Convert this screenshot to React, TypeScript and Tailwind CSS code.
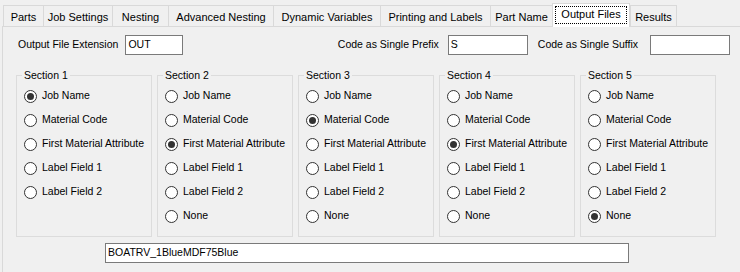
const tabs = [
  { label: "Parts", w: "w-[40px]" },
  { label: "Job Settings", w: "w-[69px]" },
  { label: "Nesting", w: "w-[56px]" },
  { label: "Advanced Nesting", w: "w-[105px]" },
  { label: "Dynamic Variables", w: "w-[107px]" },
  { label: "Printing and Labels", w: "w-[110px]" },
  { label: "Part Name", w: "w-[62px]" },
  { label: "Output Files", w: "w-[78px]", selected: true },
  { label: "Results", w: "w-[47px]", last: true },
];

const options = [
  "Job Name",
  "Material Code",
  "First Material Attribute",
  "Label Field 1",
  "Label Field 2",
  "None",
];

const sections = [
  { title: "Section 1", checked: 0, noNone: true },
  { title: "Section 2", checked: 2 },
  { title: "Section 3", checked: 1 },
  { title: "Section 4", checked: 2 },
  { title: "Section 5", checked: 5 },
];

function Radio({ label, checked }: { label: string; checked: boolean }) {
  return (
    <div className="flex items-center h-[24px]">
      <span className="w-[13px] h-[13px] rounded-full border border-[#333333] bg-white flex items-center justify-center shrink-0">
        {checked && <span className="w-[7px] h-[7px] rounded-full bg-[#333333]" />}
      </span>
      <span className="ml-[5px] whitespace-nowrap">{label}</span>
    </div>
  );
}

function TextBox({ value, className }: { value: string; className: string }) {
  return (
    <div
      className={
        "h-[20px] border border-[#7a7a7a] bg-white flex items-center pl-[2px] " +
        className
      }
    >
      {value}
    </div>
  );
}

export default function App() {
  return (
    <div className="w-[740px] h-[272px] overflow-hidden bg-[#f0f0f0] pt-[3px] text-black font-[Liberation_Sans,Arial,sans-serif]">
      {/* tab strip */}
      <div className="flex items-end h-[23px] pl-[3px] text-[11px]">
        {tabs.map((t) =>
          t.selected ? (
            <div
              key={t.label}
              className={`${t.w} h-[24px] -mb-px relative z-10 bg-white border border-b-0 border-[#d9d9d9] p-[2px] pb-[3px]`}
            >
              <div className="h-full border border-dotted border-black flex items-center justify-center whitespace-nowrap pb-[1px]">
                {t.label}
              </div>
            </div>
          ) : (
            <div
              key={t.label}
              className={`${t.w} h-[21px] border-t border-l ${
                t.last ? "border-r" : ""
              } border-[#d9d9d9] flex items-center justify-center whitespace-nowrap pt-[2px]`}
            >
              {t.label}
            </div>
          )
        )}
      </div>

      {/* tab page */}
      <div className="ml-[2px] w-[740px] h-[260px] border-t border-l border-[#d9d9d9] text-[10.5px]">
        <div className="flex items-center h-[20px] mt-[8px] pl-[15px] pr-[12px]">
          <span>Output File Extension</span>
          <TextBox value="OUT" className="w-[58px] ml-[7px]" />
          <span className="ml-auto">Code as Single Prefix</span>
          <TextBox value="S" className="w-[80px] ml-[9px]" />
          <span className="ml-[10px]">Code as Single Suffix</span>
          <TextBox value="" className="w-[80px] ml-[12px]" />
        </div>

        <div className="flex gap-[5px] mt-[13px] pl-[13px]">
          {sections.map((s) => (
            <fieldset
              key={s.title}
              className="w-[136px] h-[169px] border border-[#dcdcdc] pl-[7px] pt-[2px]"
            >
              <legend className="-ml-[2px] px-[2px] leading-[14px]">{s.title}</legend>
              {options
                .filter((o) => !(s.noNone && o === "None"))
                .map((o, i) => (
                  <Radio key={o} label={o} checked={i === s.checked} />
                ))}
            </fieldset>
          ))}
        </div>

        <TextBox value="BOATRV_1BlueMDF75Blue" className="w-[524px] ml-[102px] mt-[6px]" />
      </div>
    </div>
  );
}
